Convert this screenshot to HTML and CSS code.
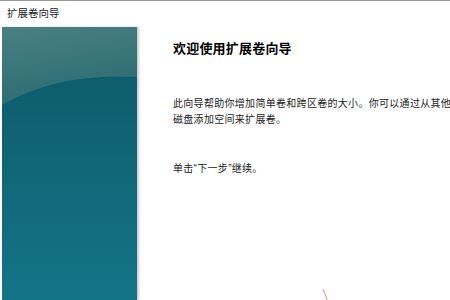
FILE: index.html
```html
<!DOCTYPE html>
<html lang="zh-CN">

<head>
    <meta charset="UTF-8">
    <title>扩展卷向导</title>
    <link rel="stylesheet" href="styles.css">
</head>

<body>
    <div class="window">
        <div class="titlebar">扩展卷向导</div>
        <div class="main">
            <div class="side">
                <svg class="side-art" viewBox="0 0 135 273" preserveAspectRatio="none">
                    <defs>
                        <linearGradient id="base" x1="0" y1="0" x2="0" y2="1">
                            <stop offset="0" stop-color="#0c5866"/>
                            <stop offset="1" stop-color="#147487"/>
                        </linearGradient>
                        <linearGradient id="cap" x1="0" y1="0" x2="0.3" y2="1">
                            <stop offset="0" stop-color="#4a8083"/>
                            <stop offset="1" stop-color="#2a6d72"/>
                        </linearGradient>
                    </defs>
                    <rect width="135" height="273" fill="url(#base)"/>
                    <path d="M0 0 H135 V50 Q55 46 0 78 Z" fill="url(#cap)"/>
                </svg>
            </div>
            <div class="content">
                <h1 class="heading">欢迎使用扩展卷向导</h1>
                <p class="desc">此向导帮助你增加简单卷和跨区卷的大小。你可以通过从其他磁盘添加空间来扩展卷。</p>
                <p class="hint">单击“下一步”继续。</p>
            </div>
        </div>
        <svg class="cursor" width="8" height="14" viewBox="0 0 8 14">
            <path d="M1 0 L6 13" stroke="#c79a8e" stroke-width="1" fill="none"/>
        </svg>
    </div>
</body>

</html>
```

FILE: styles.css
```css
/* wizard window */
html,
body {
    margin: 0;
    padding: 0;
    background: #fff;
}

body {
    font-family: "Noto Sans CJK SC", "Noto Sans", sans-serif;
    color: #111;
}

.window {
    position: relative;
    width: 450px;
    height: 300px;
    overflow: hidden;
    border-top: 1px solid #9a9a9a;
    box-sizing: border-box;
}

.titlebar {
    height: 26px;
    line-height: 24px;
    padding-left: 7px;
    font-size: 10.5px;
    color: #222;
}

.main {
    display: flex;
    height: 273px;
}

.side {
    width: 135px;
    margin-left: 2px;
    flex-shrink: 0;
    box-shadow: 2px 0 2px rgba(0, 0, 0, 0.2);
}

.side-art {
    display: block;
    width: 135px;
    height: 273px;
}

.content {
    padding-left: 36px;
    flex: 1;
    min-width: 0;
}

.heading {
    margin: 10px 0 0;
    font-size: 13px;
    font-weight: bold;
    letter-spacing: 0.2px;
    line-height: 22px;
    color: #000;
}

.desc {
    margin: 36px 0 0;
    font-size: 10px;
    letter-spacing: 0.3px;
    line-height: 16px;
    width: 285px;
    color: #222;
}

.hint {
    margin: 34px 0 0;
    font-family: "Liberation Sans", "Noto Sans CJK SC", sans-serif;
    font-size: 10px;
    letter-spacing: 0.3px;
    line-height: 16px;
    color: #222;
}

.cursor {
    position: absolute;
    left: 322px;
    top: 288px;
}
```
